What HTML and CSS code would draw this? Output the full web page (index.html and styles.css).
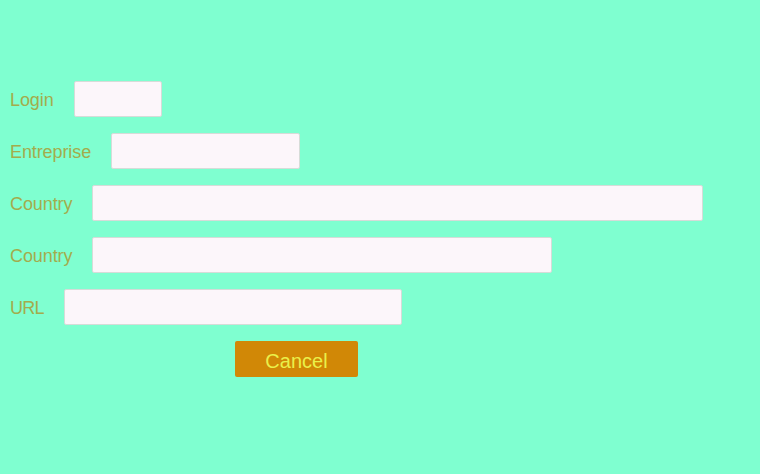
FILE: index.html
```html
<!DOCTYPE html>
<html>
<head>
<meta charset="utf-8">
<link rel="stylesheet" href="styles.css">
</head>
<body>
<form class="form">
  <div class="row"><label class="label">Login</label><input class="field w-login" type="text"></div>
  <div class="row"><label class="label">Entreprise</label><input class="field w-ent" type="text"></div>
  <div class="row"><label class="label">Country</label><input class="field w-country" type="text"></div>
  <div class="row"><label class="label">Country</label><input class="field w-country2" type="text"></div>
  <div class="row"><label class="label label-url">URL</label><input class="field w-url" type="text"></div>
  <div class="actions"><button class="btn" type="button">Cancel</button></div>
</form>
</body>
</html>
```
FILE: styles.css
```css
html, body {
  margin: 0;
  padding: 0;
  background: #7fffd0;
  font-family: "Liberation Sans", Arial, sans-serif;
}
.form {
  display: flex;
  flex-direction: column;
  gap: 16px;
  padding: 81px 10px 0 10px;
}
.row {
  display: flex;
  align-items: center;
  gap: 20px;
  height: 36px;
}
.label {
  font-size: 18px;
  letter-spacing: -0.1px;
  line-height: 22px;
  padding-top: 1px;
  color: #a3ac4c;
}
.label-url {
  letter-spacing: -0.7px;
}
.field {
  box-sizing: border-box;
  height: 36px;
  margin: 0;
  background: #fcf6fa;
  border: 1px solid #d6dcd8;
  border-radius: 2px;
  outline: none;
}
.w-login { width: 88px; }
.w-ent { width: 189px; }
.w-country { width: 611px; }
.w-country2 { width: 460px; }
.w-url { width: 338px; }
.actions {
  display: flex;
  padding-left: 225px;
}
.btn {
  box-sizing: border-box;
  width: 123px;
  height: 36px;
  background: #d18806;
  color: #eaf04a;
  border: none;
  border-radius: 2px;
  font-family: "Liberation Sans", Arial, sans-serif;
  font-size: 20px;
  padding: 4px 0 0 0;
}
```
